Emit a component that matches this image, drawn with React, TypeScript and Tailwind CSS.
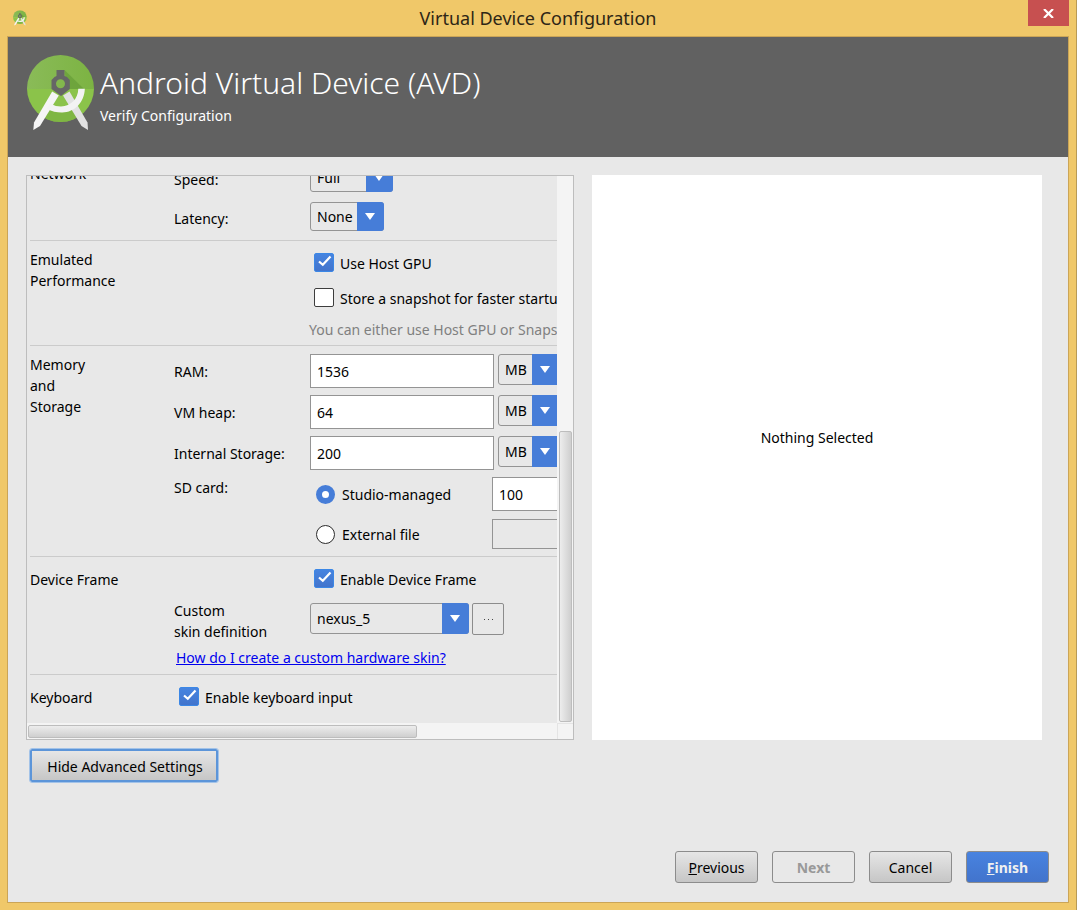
import type { InputHTMLAttributes, ReactNode, SelectHTMLAttributes } from "react";

function Logo({ className }: { className: string }) {
  return (
    <svg viewBox="0 0 68 76" className={className} aria-hidden="true">
      <defs>
        <linearGradient id="disc-top" x1="0" y1="0" x2="1" y2="0">
          <stop offset="0" stopColor="#8abb58" />
          <stop offset="1" stopColor="#7cb342" />
        </linearGradient>
        <clipPath id="disc">
          <circle cx="33.5" cy="33.5" r="33.5" />
        </clipPath>
      </defs>
      <g clipPath="url(#disc)">
        <rect width="68" height="34" fill="url(#disc-top)" />
        <rect y="34" width="68" height="34" fill="#8bc34a" />
        <path d="M37.500 15 L57 34 H40 Z" fill="#689f38" opacity="0.75" />
        <path d="M21 54 Q34 61 47 54 L52 68 H14 Z" fill="#7bb040" opacity="0.7" />
      </g>
      <path d="M36 40.500 L42.500 36.500 L60.500 67.500 L61 75 L54.500 71 Z" fill="#e2e2e2" />
      <path d="M31.800 40.500 L25.200 36.500 L7 67.500 L6.300 75 L13 71 Z" fill="#f5f5f5" />
      <path d="M23 48.500 Q28 51.500 34 51.500 C44 51 51 44 51.300 33.800 H57.800 C57.500 47 48 57.500 35 57.500 Q27 57.500 20 54 Z" fill="#f3f3f3" />
      <path
        fillRule="evenodd"
        d="M29.500 15 H37.500 V21 L40 22 L42.800 25 V34 L34 41 L24.500 34 V25 L27.500 22 L29.500 21 Z M33.500 24.200 A4.500 4.500 0 1 0 33.500 33.200 A4.500 4.500 0 1 0 33.500 24.200 Z"
        fill="#666666"
      />
    </svg>
  );
}

function Select({
  width,
  height = "h-[31px]",
  options,
  ...rest
}: { width: string; height?: string; options: string[] } & SelectHTMLAttributes<HTMLSelectElement>) {
  return (
    <span className={`relative block shrink-0 ${width} ${height}`}>
      <select
        {...rest}
        className="size-full appearance-none rounded-[3px] border border-[#949494] bg-[#e8e8e8] pt-px pr-7 pl-[6px] text-sm text-black"
      >
        {options.map((o) => (
          <option key={o}>{o}</option>
        ))}
      </select>
      <span className="pointer-events-none absolute inset-y-0 right-0 flex w-[27px] items-center justify-center rounded-r-[3px] bg-[#467dd8]">
        <svg viewBox="0 0 10 7" className="mr-px h-[7px] w-[10px]" aria-hidden="true">
          <path d="M0 0H10L5 7Z" fill="#fff" />
        </svg>
      </span>
    </span>
  );
}

function CheckBox({ label, defaultChecked }: { label: string; defaultChecked?: boolean }) {
  return (
    <label className="flex items-center gap-[6px] whitespace-nowrap">
      <span className="relative block h-[21px] w-5 shrink-0">
        <input
          type="checkbox"
          defaultChecked={defaultChecked}
          className="peer block h-[19px] w-5 appearance-none rounded-[2px] border border-[#3d3d3d] bg-white checked:border-[#3b87e6] checked:bg-linear-to-b checked:from-[#4684e0] checked:to-[#4274cc]"
        />
        <svg
          viewBox="0 0 20 19"
          className="pointer-events-none absolute top-0 left-0 hidden h-[19px] w-5 peer-checked:block"
          aria-hidden="true"
        >
          <path d="M5 8.500 L8.800 11.800 L16.500 3.500" fill="none" stroke="#fff" strokeWidth="2.200" />
        </svg>
      </span>
      {label}
    </label>
  );
}

function Radio({ label, defaultChecked }: { label: string; defaultChecked?: boolean }) {
  return (
    <label className="flex w-[176px] items-center gap-[7px] whitespace-nowrap">
      <input
        type="radio"
        name="sdcard"
        defaultChecked={defaultChecked}
        className="size-[19px] shrink-0 appearance-none rounded-full border border-[#2b2b2b] bg-white checked:border-[6px] checked:border-[#467dd8]"
      />
      {label}
    </label>
  );
}

function TextField({ className, ...rest }: InputHTMLAttributes<HTMLInputElement>) {
  return (
    <input
      type="text"
      {...rest}
      className={`shrink-0 border border-[#949494] bg-white px-[6px] text-sm text-black disabled:bg-[#e8e8e8] ${className}`}
    />
  );
}

function Section({ title, className, children }: { title: string; className: string; children: ReactNode }) {
  return (
    <section className={`grid shrink-0 grid-cols-[144px_1fr] ${className}`}>
      <h2 className="whitespace-pre-line">{title}</h2>
      <div className="min-w-0">{children}</div>
    </section>
  );
}

function MemoryRow({ id, label, value }: { id: string; label: string; value: string }) {
  return (
    <div className="flex h-[34px]">
      <label htmlFor={id} className="w-[136px] shrink-0 self-center">
        {label}
      </label>
      <TextField id={id} defaultValue={value} className="mr-1 h-[34px] w-[184px]" />
      <Select aria-label={`${label} unit`} width="w-[61px]" options={["MB", "GB"]} />
    </div>
  );
}

function DialogButton({ children, className, disabled }: { children: ReactNode; className: string; disabled?: boolean }) {
  return (
    <button
      type="button"
      disabled={disabled}
      className={`h-8 w-[83px] rounded-[3px] border border-[#8c8c8c] pt-px text-sm ${className}`}
    >
      {children}
    </button>
  );
}

export default function App() {
  return (
    <div className="flex h-screen flex-col border-r border-[#b89a55] bg-[#f0c869] pr-[7px] pb-[7px] pl-[7px] font-['Noto_Sans',sans-serif] text-sm leading-[21px] text-black">
      <header className="grid h-9 shrink-0 grid-cols-[1fr_auto_1fr] items-start">
        <Logo className="mt-[10px] ml-[6px] h-4 w-[14px]" />
        <h1 className="pt-2 text-lg leading-[21px] text-[#2e2616]">Virtual Device Configuration</h1>
        <button
          type="button"
          aria-label="Close"
          className="flex h-[26px] w-[41px] items-center justify-center justify-self-end bg-[#c75050]"
        >
          <svg viewBox="0 0 11 9" className="h-[9px] w-[11px]" aria-hidden="true">
            <path d="M1 0 L10 9 M10 0 L1 9" stroke="#fff" strokeWidth="2.200" />
          </svg>
        </button>
      </header>

      <main className="flex min-h-0 flex-1 flex-col border border-[#cba557] bg-[#e8e8e8]">
        <div className="flex h-[120px] shrink-0 gap-[5px] bg-[#616161] px-[19px] pt-[18px] text-white">
          <Logo className="h-[76px] w-[68px]" />
          <div>
            <p className="pt-[10px] text-[30px] leading-9 font-light">Android Virtual Device (AVD)</p>
            <p className="pt-1">Verify Configuration</p>
          </div>
        </div>

        <div className="flex min-h-0 flex-1 gap-[18px] pt-[18px] pr-[26px] pl-[18px]">
          <div className="grid min-w-0 flex-[546_1_0%] grid-cols-[minmax(0,1fr)_16px] grid-rows-[minmax(0,1fr)_16px] border border-[#bdbdbd]">
            <div className="flex min-h-0 flex-col justify-end divide-y divide-[#cbcbcb] overflow-hidden pl-[3px]">
              <Section title="Network" className="pb-[9px]">
                <div className="flex h-[39px]">
                  <label htmlFor="speed" className="w-[136px] pt-[6px]">
                    Speed:
                  </label>
                  <Select id="speed" width="w-[83px]" height="h-[29px]" options={["Full", "HSDPA", "UMTS", "EDGE"]} />
                </div>
                <div className="flex h-[29px] items-center">
                  <label htmlFor="latency" className="w-[136px] pt-1">
                    Latency:
                  </label>
                  <Select id="latency" width="w-[74px]" height="h-[29px]" options={["None", "UMTS", "EDGE"]} />
                </div>
              </Section>

              <Section title={"Emulated\nPerformance"} className="pt-2 pb-[5px]">
                <div className="ml-[140px] flex flex-col pt-1">
                  <div className="h-[35px]">
                    <CheckBox label="Use Host GPU" defaultChecked />
                  </div>
                  <div className="h-[31px]">
                    <CheckBox label="Store a snapshot for faster startup" />
                  </div>
                </div>
                <p className="ml-[135px] whitespace-nowrap text-[#808080]">
                  You can either use Host GPU or Snapshots
                </p>
              </Section>

              <Section title={"Memory\nand\nStorage"} className="pt-2 pb-[7px]">
                <div className="flex flex-col gap-[7px]">
                  <MemoryRow id="ram" label="RAM:" value="1536" />
                  <MemoryRow id="heap" label="VM heap:" value="64" />
                  <MemoryRow id="storage" label="Internal Storage:" value="200" />
                  <fieldset className="flex">
                    <legend className="float-left w-[142px]">SD card:</legend>
                    <div className="flex flex-col gap-2">
                      <div className="flex">
                        <Radio label="Studio-managed" defaultChecked />
                        <TextField aria-label="SD card size" defaultValue="100" className="h-[34px] w-[184px]" />
                      </div>
                      <div className="flex">
                        <Radio label="External file" />
                        <TextField aria-label="SD card file" disabled className="h-[30px] w-[184px]" />
                      </div>
                    </div>
                  </fieldset>
                </div>
              </Section>

              <Section title="Device Frame" className="pt-3 pb-[6px]">
                <div className="ml-[140px] h-[34px]">
                  <CheckBox label="Enable Device Frame" defaultChecked />
                </div>
                <div className="flex h-[44px]">
                  <label htmlFor="skin" className="-mt-[3px] w-[136px] pr-8">
                    Custom
                    <br />
                    skin definition
                  </label>
                  <Select id="skin" width="w-[159px]" options={["nexus_5", "nexus_4", "No Skin"]} />
                  <button
                    type="button"
                    aria-label="Browse for a skin"
                    className="ml-[3px] flex h-8 w-8 items-center justify-center rounded-[2px] border border-[#8c8c8c]"
                  >
                    <svg viewBox="0 0 9 1" className="h-px w-[9px]" aria-hidden="true">
                      <path d="M0 0h1v1H0zM4 0h1v1H4zM8 0h1v1H8z" fill="#444" />
                    </svg>
                  </button>
                </div>
                <a href="#skin" className="ml-[2px] text-[#0000ee] underline">
                  How do I create a custom hardware skin?
                </a>
              </Section>

              <Section title="Keyboard" className="pt-3 pb-[15px]">
                <div className="ml-[5px]">
                  <CheckBox label="Enable keyboard input" defaultChecked />
                </div>
              </Section>
            </div>

            <div className="flex flex-col bg-[#f4f4f4] py-px pr-px pl-[2px]">
              <div className="flex-[255_1_0%]" />
              <div className="flex-[290_1_0%] rounded-[2px] border border-[#bdbdbd] bg-linear-to-r from-[#ededed] to-[#cfcfcf]" />
            </div>
            <div className="flex bg-[#f4f4f4] pt-[2px] pr-px pb-px pl-px">
              <div className="flex-[388_1_0%] rounded-[2px] border border-[#bdbdbd] bg-linear-to-b from-[#ededed] to-[#cfcfcf]" />
              <div className="flex-[140_1_0%]" />
            </div>
            <div className="border-t border-l border-[#e4e4e4] bg-[#f4f4f4]" />
          </div>

          <div className="flex min-w-0 flex-[450_1_0%] items-center justify-center bg-white">
            <p className="pb-10">Nothing Selected</p>
          </div>
        </div>

        <div className="px-[22px] pt-[9px]">
          <button
            type="button"
            className="h-[33px] w-[188px] rounded-[2px] border-2 border-[#5c95d9] bg-linear-to-b from-[#e6e6e6] to-[#c6c6c6] pt-[2px] pl-[2px] text-sm outline-1 outline-[#a3c3e8]"
          >
            Hide Advanced Settings
          </button>
        </div>

        <footer className="mt-[69px] flex shrink-0 justify-end gap-[14px] pr-[19px] pb-[19px]">
          <DialogButton className="bg-linear-to-b from-[#e6e6e6] to-[#c6c6c6]">
            <u>P</u>revious
          </DialogButton>
          <DialogButton disabled className="font-bold text-[#999999]">
            Next
          </DialogButton>
          <DialogButton className="bg-linear-to-b from-[#e6e6e6] to-[#c6c6c6]">Cancel</DialogButton>
          <DialogButton className="bg-linear-to-b from-[#4883e0] to-[#4274cc] font-bold text-[#f0f0f0]">
            <u>F</u>inish
          </DialogButton>
        </footer>
      </main>
    </div>
  );
}
